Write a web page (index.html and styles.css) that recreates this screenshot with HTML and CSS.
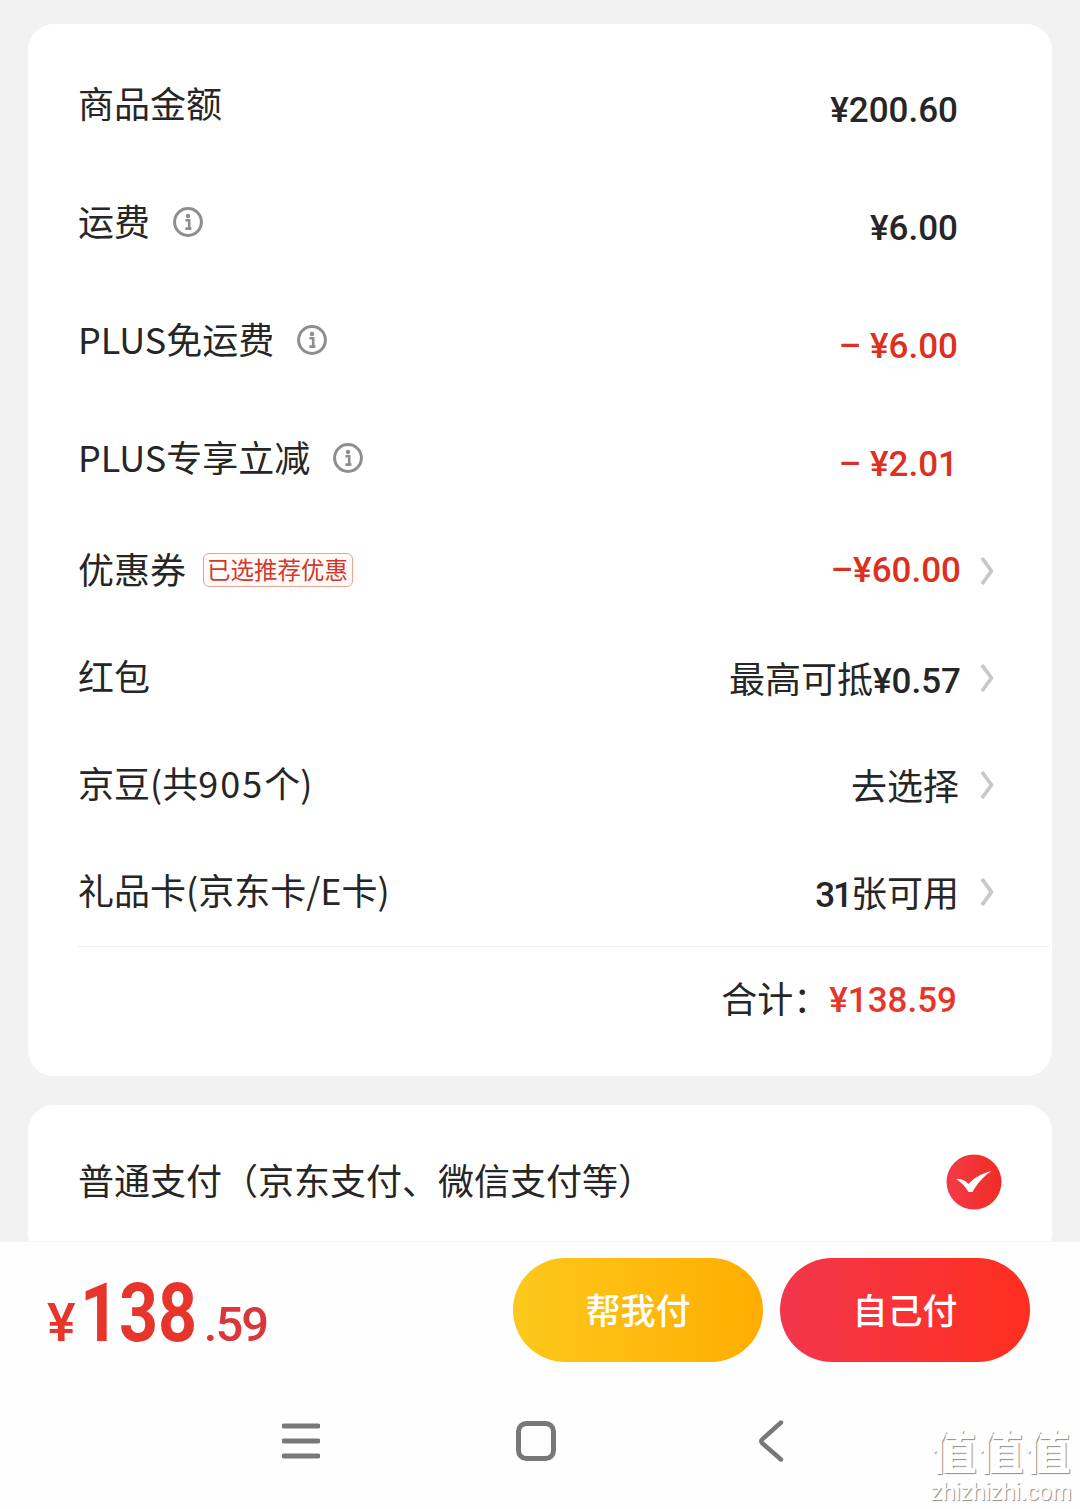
FILE: index.html
```html
<!DOCTYPE html>
<html lang="zh-CN">

<head>
    <meta charset="UTF-8">
    <meta name="viewport" content="width=device-width, initial-scale=1.0">
    <title>订单结算</title>
    <link rel="stylesheet" href="styles.css">
</head>

<body>
    <svg class="icon-defs" width="0" height="0">
        <symbol id="info" viewBox="0 0 30 30">
            <circle cx="15" cy="15" r="13.400" fill="none" stroke="#8e8e8e" stroke-width="3" />
            <circle cx="15" cy="9" r="2.200" fill="#8e8e8e" />
            <path d="M12.400 13.200h3.800v8.200M12.400 21.600h6" fill="none" stroke="#8e8e8e" stroke-width="2.600" />
        </symbol>
        <symbol id="chevron" viewBox="0 0 14 30">
            <path d="M2 2l9.500 13L2 28" fill="none" stroke="#c8c8c8" stroke-width="3.800" stroke-linejoin="round" />
        </symbol>
    </svg>

    <main class="content">
        <section class="card summary">
            <div class="row tall">
                <span class="label">商品金额</span>
                <span class="value plain num">¥200.60</span>
            </div>
            <div class="row tall">
                <span class="label">运费</span>
                <svg class="info"><use href="#info" /></svg>
                <span class="value plain num">¥6.00</span>
            </div>
            <div class="row tall">
                <span class="label">PLUS免运费</span>
                <svg class="info"><use href="#info" /></svg>
                <span class="value plain num red">– ¥6.00</span>
            </div>
            <div class="row tall">
                <span class="label">PLUS专享立减</span>
                <svg class="info"><use href="#info" /></svg>
                <span class="value plain num red">– ¥2.01</span>
            </div>
            <div class="row">
                <span class="label">优惠券</span>
                <span class="chip">已选推荐优惠</span>
                <span class="value num red wide">–¥60.00</span>
                <svg class="chevron"><use href="#chevron" /></svg>
            </div>
            <div class="row">
                <span class="label">红包</span>
                <span class="value wide">最高可抵<span class="num">¥0.57</span></span>
                <svg class="chevron"><use href="#chevron" /></svg>
            </div>
            <div class="row">
                <span class="label">京豆(共<span class="digits">905</span>个)</span>
                <span class="value">去选择</span>
                <svg class="chevron"><use href="#chevron" /></svg>
            </div>
            <div class="row">
                <span class="label">礼品卡(京东卡/E卡)</span>
                <span class="value"><span class="num count">31</span>张可用</span>
                <svg class="chevron"><use href="#chevron" /></svg>
            </div>
            <div class="total">
                <span class="total-label">合计：</span>
                <span class="total-amount">¥138.59</span>
            </div>
        </section>

        <section class="card pay">
            <span class="label">普通支付（京东支付、微信支付等）</span>
            <svg class="check" viewBox="0 0 56 56">
                <defs>
                    <linearGradient id="checkFill" x1="0" y1="0" x2="1" y2="0">
                        <stop offset="0" stop-color="#f23b48" />
                        <stop offset="1" stop-color="#f12c24" />
                    </linearGradient>
                </defs>
                <circle cx="28" cy="28" r="27.500" fill="url(#checkFill)" />
                <path d="M10 25c5-.5 9 1 12.500 5 6-6.500 13-10.500 23-13-8 5.500-14 12-19 21h-4c-3-5.500-7-9.500-12.500-13z" fill="#fff" />
            </svg>
        </section>
    </main>

    <footer class="footer">
        <div class="action-bar">
            <div class="price">
                <span class="price-sign">¥</span><span class="price-int">138</span><span class="price-dec">.59</span>
            </div>
            <div class="buttons">
                <button class="btn btn-help" type="button">帮我付</button>
                <button class="btn btn-self" type="button">自己付</button>
            </div>
        </div>
        <nav class="nav">
            <svg class="nav-menu" viewBox="0 0 38 38">
                <path d="M2 4h34M2 19h34M2 34h34" fill="none" stroke="#787878" stroke-width="5" stroke-linecap="round" />
            </svg>
            <svg class="nav-home" viewBox="0 0 40 40">
                <rect x="2.500" y="2.500" width="35" height="35" rx="8" fill="none" stroke="#787878" stroke-width="5" />
            </svg>
            <svg class="nav-back" viewBox="0 0 26 42">
                <path d="M23 2.500L4 19.500q-1.500 1.500 0 3.500L23 39.500" fill="none" stroke="#787878" stroke-width="4.400" stroke-linecap="round" />
            </svg>
        </nav>
        <div class="watermark">
            <div class="wm-zh">值值值</div>
            <div class="wm-en">zhizhizhi.com</div>
        </div>
    </footer>
</body>

</html>
```

FILE: styles.css
```css
* {
    box-sizing: border-box;
}

body {
    margin: 0;
    width: 1080px;
    height: 1509px;
    overflow: hidden;
    display: flex;
    flex-direction: column;
    background: #f2f2f2;
    color: #262626;
    font-family: "Noto Sans CJK SC", "Noto Sans", sans-serif;
    font-size: 36px;
}

.icon-defs {
    display: none;
}

.content {
    height: 1241px;
    padding: 24px 28px 0;
    overflow: hidden;
}

.card {
    background: #fff;
    border-radius: 26px;
}

.summary {
    padding: 22px 0 23px;
}

.row {
    display: flex;
    align-items: center;
    height: 107px;
    padding: 0 58px 0 50px;
}

.row.tall {
    height: 118px;
}

.label {
    margin-top: -7px;
    white-space: nowrap;
    line-height: 48px;
}

.digits {
    letter-spacing: 2px;
}

.info {
    width: 30px;
    height: 30px;
    margin-left: 23px;
    margin-top: -2px;
}

.value {
    margin-left: auto;
    margin-top: -3px;
    white-space: nowrap;
}

.num {
    font-family: Roboto, sans-serif;
    font-size: 35px;
    font-weight: 500;
}

.count {
    letter-spacing: -2px;
}

.value.plain {
    margin-right: 36px;
    margin-top: 10px;
}

.value.wide {
    margin-right: -2px;
}

.red {
    color: #dd3020;
}

.chevron {
    width: 14px;
    height: 30px;
    margin-left: 21px;
    margin-top: -2px;
}

.chip {
    margin-left: 17px;
    margin-top: -4px;
    padding: 0 3px;
    height: 34px;
    width: 150px;
    border: 1px solid #e6a596;
    border-radius: 6px;
    background: #fff9f7;
    color: #d2382c;
    font-size: 23.500px;
    line-height: 30px;
    white-space: nowrap;
}

.total {
    display: flex;
    justify-content: flex-end;
    align-items: center;
    height: 107px;
    margin: 0 2px 0 50px;
    padding-right: 93px;
    border-top: 1px solid #f0f0f0;
}

.total-label {
    margin-top: -7px;
}

.total-amount {
    color: #e8352c;
    font-family: Roboto, sans-serif;
    font-size: 35px;
    font-weight: 500;
}

.pay {
    display: flex;
    justify-content: space-between;
    align-items: center;
    margin-top: 29px;
    height: 154px;
    padding: 0 50px 0 50px;
}

.check {
    width: 56px;
    height: 56px;
}

.footer {
    position: relative;
    flex: 1;
    background: #fefefe;
    border-top: 1px solid #f4f4f4;
}

.action-bar {
    display: flex;
    justify-content: space-between;
    align-items: flex-start;
    padding: 16px 50px 0 47px;
    height: 142px;
}

.price {
    display: flex;
    align-items: baseline;
    margin-top: 7px;
    color: #e8352c;
    font-family: Roboto, sans-serif;
    font-weight: 500;
    line-height: 96px;
}

.price-sign {
    font-size: 54px;
    margin-right: 4px;
}

/* the digits in the shot are narrower than Roboto's */
.price-int {
    display: inline-block;
    margin-right: -23px;
    font-size: 82px;
    font-weight: 700;
    transform: scaleX(0.83);
    transform-origin: left;
}

.price-dec {
    margin-left: 6px;
    font-size: 49px;
    letter-spacing: -2px;
    color: #d8383c;
}

.buttons {
    display: flex;
    gap: 17px;
}

.btn {
    width: 250px;
    height: 104px;
    padding: 0 0 4px;
    border: none;
    border-radius: 52px;
    color: #fff;
    font-family: "Noto Sans CJK SC", sans-serif;
    font-size: 35px;
    font-weight: 500;
}

.btn-help {
    background: linear-gradient(90deg, #fdc81c, #ffad00);
}

.btn-self {
    background: linear-gradient(90deg, #f2364c, #ff2f1f);
}

.nav {
    display: flex;
    align-items: center;
    padding: 36px 0 0 282px;
}

.nav-menu {
    width: 38px;
    height: 38px;
}

.nav-home {
    width: 40px;
    height: 40px;
    margin-left: 196px;
}

.nav-back {
    width: 26px;
    height: 42px;
    margin-left: 202px;
}

.watermark {
    position: absolute;
    right: 7px;
    bottom: 7px;
    width: 144px;
    display: flex;
    flex-direction: column;
    align-items: center;
    gap: 6px;
    color: #fff;
    text-shadow: 1px 1px 1px #8c8c8c;
}

.wm-zh {
    font-family: "Liberation Sans", "Noto Sans CJK SC", sans-serif;
    font-size: 46px;
    font-weight: 700;
    line-height: 46px;
    letter-spacing: 1px;
    white-space: nowrap;
}

.wm-en {
    font-family: "Liberation Sans", sans-serif;
    font-size: 23.500px;
    line-height: 20px;
}
```
